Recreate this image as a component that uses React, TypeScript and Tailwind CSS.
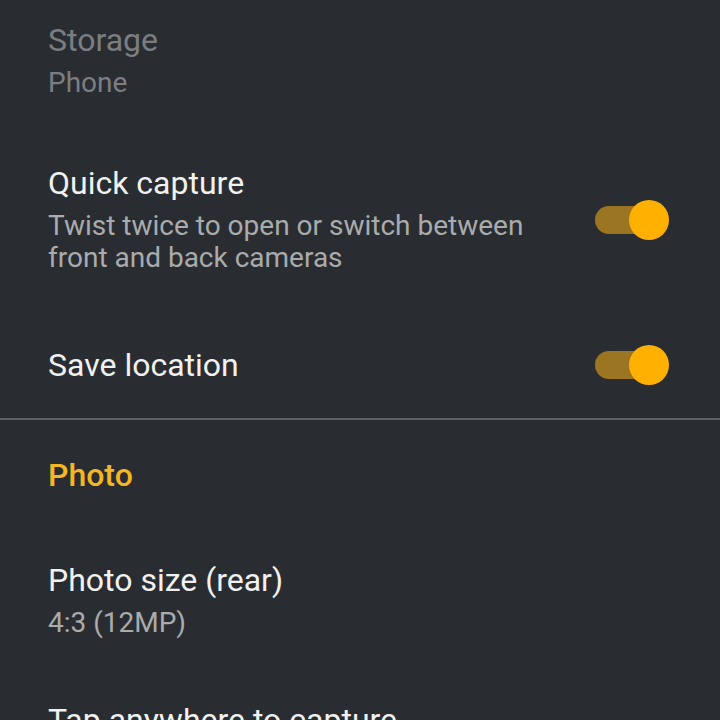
const Toggle = () => (
  <div className="relative w-[74px] h-10 shrink-0">
    <div className="absolute left-0 top-[6px] w-[60px] h-[28px] rounded-full bg-[#9b7521]" />
    <div className="absolute right-0 top-0 w-10 h-10 rounded-full bg-[#ffb000]" />
  </div>
);

const Row = ({
  title,
  sub,
  disabled,
  toggle,
  className,
}: {
  title: string;
  sub?: string[];
  disabled?: boolean;
  toggle?: boolean;
  className?: string;
}) => (
  <div className={`flex items-center pl-12 pr-[51px] ${className ?? ''}`}>
    <div className="flex-1 min-w-0">
      <div className={`text-[32px] leading-[36px] whitespace-nowrap ${disabled ? 'text-[#7b7e81]' : 'text-[#f1f1f1]'}`}>
        {title}
      </div>
      {sub && (
        <div className={`mt-[9px] text-[28px] leading-[32px] ${disabled ? 'text-[#7b7e81]' : 'text-[#a9abad]'}`}>
          {sub.map((s) => (
            <div key={s} className="whitespace-nowrap">{s}</div>
          ))}
        </div>
      )}
    </div>
    {toggle && <Toggle />}
  </div>
);

export default function App() {
  return (
    <div
      className="w-[720px] h-[720px] overflow-hidden bg-[#292d31]"
      style={{ fontFamily: 'Roboto, "Noto Sans", sans-serif' }}
    >
      <Row className="pt-[22px]" title="Storage" sub={['Phone']} disabled />
      <Row
        className="mt-[66px]"
        title="Quick capture"
        sub={['Twist twice to open or switch between', 'front and back cameras']}
        toggle
      />
      <Row className="mt-[71px]" title="Save location" toggle />
      <div className="mt-[33px] h-[2px] bg-[#5f6266]" />
      <div className="mt-[37px] pl-12 text-[32px] leading-[36px] font-medium text-[#f4b622]">Photo</div>
      <Row className="mt-[69px]" title="Photo size (rear)" sub={['4:3 (12MP)']} />
      <Row className="mt-[63px]" title="Tap anywhere to capture" />
    </div>
  );
}
